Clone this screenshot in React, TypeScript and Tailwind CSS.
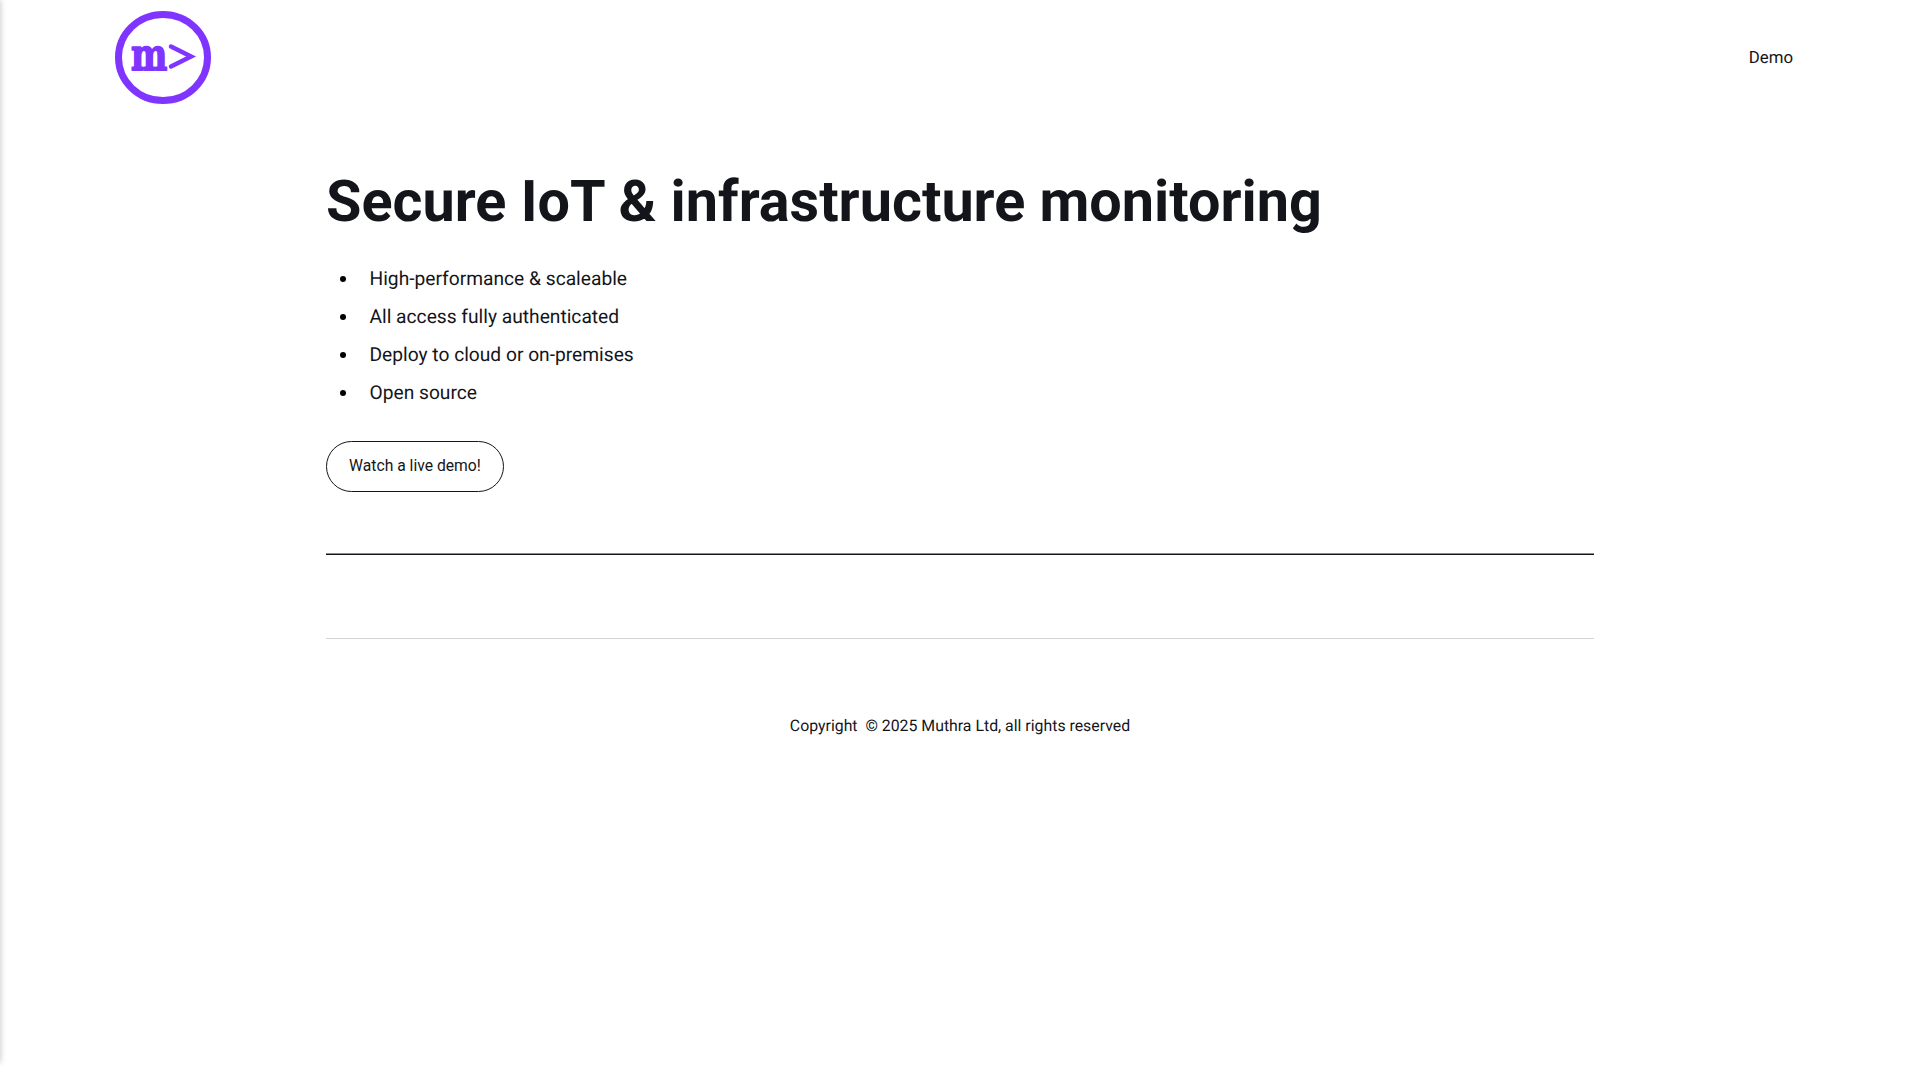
export default function App() {
  return (
    <div className="relative min-h-[1080px] bg-white font-['Roboto',sans-serif] text-[#14151a] [text-rendering:geometricPrecision]">
      {/* off-canvas menu shadow on the left edge */}
      <div className="absolute top-0 left-[-10px] h-[1062px] w-[10px] shadow-[0_0_6px_rgba(0,0,0,0.25)]"></div>

      <header className="flex h-[115px] items-center justify-between pl-[115px] pr-[127px]">
        <svg width="96" height="94" viewBox="0 0 96 94" fill="none">
          <ellipse cx="48" cy="46.5" rx="44.5" ry="43" stroke="#7f35ff" strokeWidth="7" />
          <text
            transform="translate(16 58.5) scale(0.78 1)"
            fill="#7f35ff"
            stroke="#7f35ff"
            strokeWidth="1.8"
            strokeLinejoin="round"
            fontFamily="'DejaVu Serif', serif"
            fontWeight="700"
            fontSize="44"
          >
            m
          </text>
          <path d="M56 35.5 L76 45.5 L56 55.5" stroke="#7f35ff" strokeWidth="4.5" strokeLinecap="round" strokeLinejoin="miter" />
        </svg>
        <a className="pt-[2px] text-[16.8px]">Demo</a>
      </header>

      <main className="mx-auto w-[1268px]">
        <h1 className="mt-[53px] text-[57.55px] leading-[69px] font-bold">Secure IoT &amp; infrastructure monitoring</h1>
        <ul className="mt-[23px] list-disc pl-[33px] text-[19.2px] leading-[38px] marker:text-black">
          <li className="pl-[10.5px]">High-performance &amp; scaleable</li>
          <li className="pl-[10.5px]">All access fully authenticated</li>
          <li className="pl-[10.5px]">Deploy to cloud or on-premises</li>
          <li className="pl-[10.5px]">Open source</li>
        </ul>
        <button
          type="button"
          className="mt-[29px] flex h-[51px] w-[178px] items-center justify-center rounded-[26px] border border-[#14151a] pb-[2px] text-[15.7px]"
        >
          Watch a live demo!
        </button>
        <hr className="mt-[61px] border-t border-b border-t-[#8a8b8e] border-b-[#14151a]" />
        <hr className="mt-[83px] border-t border-[#d4d4d4]" />
        <p className="mt-[75px] text-center text-[15.85px]">Copyright &nbsp;© 2025 Muthra Ltd, all rights reserved</p>
      </main>
    </div>
  );
}
